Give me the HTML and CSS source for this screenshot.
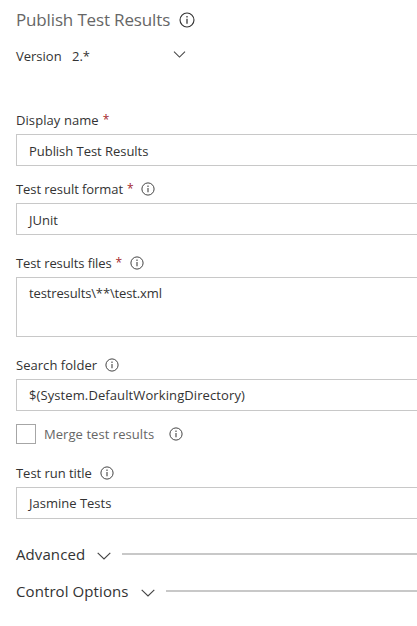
FILE: index.html
```html
<!DOCTYPE html>
<html lang="en">
<head>
<meta charset="utf-8">
<title>Publish Test Results</title>
<link rel="stylesheet" href="styles.css">
</head>
<body>
<svg class="defs" width="0" height="0">
  <symbol id="info" viewBox="0 0 14 14"><circle cx="7" cy="7" r="6.1" fill="none" stroke="currentColor"/><path d="M7 6v4.3M7 3.6v1.3" fill="none" stroke="currentColor" stroke-width="1.1"/></symbol>
  <symbol id="chevron" viewBox="0 0 14 8"><path d="M.7.8 7 7 13.3.8" fill="none" stroke="currentColor" stroke-width="1.15"/></symbol>
</svg>
<main class="panel">
  <header class="heading"><h1>Publish Test Results</h1><svg class="info large"><use href="#info"/></svg></header>
  <div class="version"><span class="version-label">Version</span><span class="version-value">2.*</span><svg class="chevron small"><use href="#chevron"/></svg></div>

  <section class="field name">
    <div class="label"><span>Display name</span><b>*</b></div>
    <div class="input">Publish Test Results</div>
  </section>
  <section class="field format">
    <div class="label"><span>Test result format</span><b>*</b><svg class="info"><use href="#info"/></svg></div>
    <div class="input">JUnit</div>
  </section>
  <section class="field files">
    <div class="label"><span>Test results files</span><b>*</b><svg class="info"><use href="#info"/></svg></div>
    <div class="input area">testresults\**\test.xml</div>
  </section>
  <section class="field folder">
    <div class="label"><span>Search folder</span><svg class="info"><use href="#info"/></svg></div>
    <div class="input">$(System.DefaultWorkingDirectory)</div>
  </section>
  <div class="merge"><i class="checkbox"></i><span>Merge test results</span><svg class="info"><use href="#info"/></svg></div>
  <section class="field title">
    <div class="label"><span>Test run title</span><svg class="info"><use href="#info"/></svg></div>
    <div class="input">Jasmine Tests</div>
  </section>

  <div class="group advanced"><span>Advanced</span><svg class="chevron"><use href="#chevron"/></svg><hr></div>
  <div class="group control"><span>Control Options</span><svg class="chevron"><use href="#chevron"/></svg><hr></div>
</main>
</body>
</html>
```
FILE: styles.css
```css
* { box-sizing: border-box; }
body {
  margin: 0;
  background: #fff;
  color: #333;
  font: 13px/20px "Open Sans", "Noto Sans", sans-serif;
  overflow: hidden;
}
.defs { display: none; }
.panel { padding: 8px 0 0 16px; }
svg { flex: none; }
span, h1 { white-space: nowrap; }
.heading { display: flex; align-items: center; height: 24px; color: #666; }
h1 { margin: 0; font-size: 17px; font-weight: 400; letter-spacing: -.15px; line-height: 24px; }
.info { width: 14px; height: 14px; margin-left: 8px; color: #444; }
.info.large { width: 16px; height: 16px; margin-left: 9px; color: #333; }
.version { display: flex; align-items: center; height: 20px; margin-top: 14px; }
.version-label { width: 56px; }
.version-value { width: 101px; }
.chevron { width: 14px; height: 8px; margin: 3px 11px 0 12px; color: #444; }
.chevron.small { width: 13px; height: 7px; margin: -3px 0 0; }
.field { margin-top: 13px; }
.field.name { margin-top: 44px; }
.field.files { margin-top: 18px; }
.field.folder { margin-top: 18px; }
.label { display: flex; align-items: center; height: 20px; margin-bottom: 4px; }
.label b { width: 6px; margin-left: 4px; color: #a4262c; font-size: 12px; font-weight: 400; }
.name .label { letter-spacing: .08px; }
.format .label span { letter-spacing: -.06px; }
.files .label span { letter-spacing: -.1px; }
.folder .label span { letter-spacing: .04px; }
.title .label span { letter-spacing: -.04px; }
.input { height: 32px; padding: 6px 12px; border: 1px solid #c8c8c8; border-right: 0; line-height: 20px; }
.name .input { letter-spacing: -.04px; }
.input.area { height: 60px; padding-top: 5px; letter-spacing: -.13px; }
.folder .input { padding-top: 5px; letter-spacing: .1px; }
.title .input { padding-top: 5px; }
.merge { display: flex; align-items: center; height: 20px; margin-top: 13px; color: #666; letter-spacing: .06px; }
.checkbox { width: 20px; height: 20px; margin-right: 8px; border: 1px solid #a6a6a6; }
.merge .info { margin-left: 15px; }
.field.title { margin-top: 19px; }
.group { display: flex; align-items: center; height: 24px; font-size: 15px; letter-spacing: .09px; }
.group.advanced { margin-top: 23px; }
.group.control { margin-top: 13px; }
hr { flex: 1; height: 2px; margin: 0; border: 0; background: #c8c8c8; }
```
